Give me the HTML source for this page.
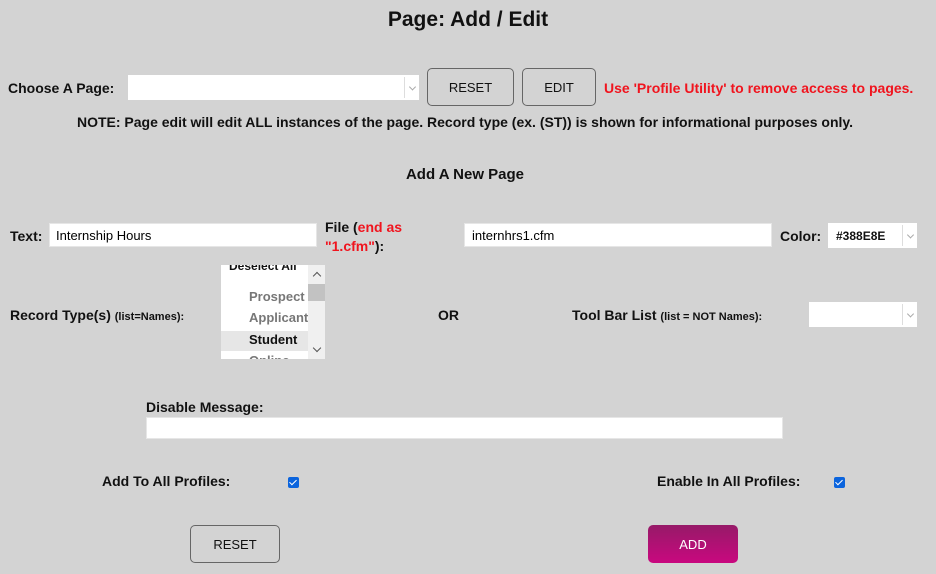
<!DOCTYPE html>
<html><head><meta charset="utf-8"><style>
*{box-sizing:border-box;margin:0;padding:0}
body{width:936px;height:574px;background:#d3d3d3;font-family:"Liberation Sans",sans-serif;font-weight:bold;font-size:14px;color:#111;position:relative;overflow:hidden}
.a{position:absolute;white-space:nowrap}
.in{position:absolute;background:#fff;border:1px solid #e6e6e6}
.sel{position:absolute;background:#fff}
.sel:after{content:"";position:absolute;right:0;top:2px;bottom:2px;width:14px;border-left:1px solid #ddd}
.sel i{position:absolute;right:4px;top:50%;width:5px;height:5px;border-right:1px solid #aaa;border-bottom:1px solid #aaa;transform:translateY(-70%) rotate(45deg)}
.btn{position:absolute;border:1px solid #666;border-radius:5px;background:#d3d3d3;font-weight:normal;font-size:13px;display:flex;align-items:center;justify-content:center}
.red{color:#f0141e}
small{font-size:11px}
.cb{position:absolute;width:11px;height:11px;background:#0b64dd;border-radius:2px}
.cb:after{content:"";position:absolute;left:3px;top:1px;width:3px;height:6px;border-right:1.5px solid #fff;border-bottom:1.5px solid #fff;transform:rotate(45deg)}
</style></head><body>
<div class="a" style="left:0;width:936px;text-align:center;top:8px;font-size:21px">Page: Add / Edit</div>
<div class="a" style="left:8px;top:80px">Choose A Page:</div>
<div class="sel" style="left:128px;top:75px;width:291px;height:25px"><i></i></div>
<div class="btn" style="left:427px;top:68px;width:87px;height:38px">RESET</div>
<div class="btn" style="left:522px;top:68px;width:74px;height:38px">EDIT</div>
<div class="a red" style="left:604px;top:80px">Use 'Profile Utility' to remove access to pages.</div>
<div class="a" style="left:0;width:930px;text-align:center;top:114px">NOTE: Page edit will edit ALL instances of the page. Record type (ex. (ST)) is shown for informational purposes only.</div>
<div class="a" style="left:0;width:930px;text-align:center;top:166px;font-size:15px">Add A New Page</div>
<div class="a" style="left:10px;top:228px">Text:</div>
<div class="in" style="left:49px;top:223px;width:268px;height:24px;font-weight:normal;font-size:13px;padding:4px 6px;color:#000">Internship Hours</div>
<div class="a" style="left:325px;top:218px;line-height:19px">File (<span class="red">end as</span><br><span class="red">"1.cfm"</span>):</div>
<div class="in" style="left:464px;top:223px;width:308px;height:24px;font-weight:normal;font-size:13px;padding:4px 7px;color:#000">internhrs1.cfm</div>
<div class="a" style="left:780px;top:228px">Color:</div>
<div class="sel" style="left:828px;top:223px;width:89px;height:25px;font-size:12px;padding:6px 8px">#388E8E<i></i></div>
<div class="a" style="left:10px;top:307px">Record Type(s) <small>(list=Names):</small></div>
<div style="position:absolute;left:221px;top:265px;width:104px;height:94px;background:#fff;overflow:hidden;font-size:13px">
 <div class="a" style="left:8px;top:-6px;font-size:12px">Deselect All</div>
 <div class="a" style="left:28px;top:24px;color:#777">Prospect</div>
 <div class="a" style="left:28px;top:45px;color:#777">Applicant</div>
 <div style="position:absolute;left:0;top:66px;width:87px;height:20px;background:#e6e6e6"></div>
 <div class="a" style="left:28px;top:67px">Student</div>
 <div class="a" style="left:28px;top:88px;color:#777">Online</div>
 <div style="position:absolute;left:87px;top:0;width:17px;height:94px;background:#f0f0f0"></div>
 <div style="position:absolute;left:87px;top:19px;width:17px;height:17px;background:#c2c2c2"></div>
 <div style="position:absolute;left:93px;top:8px;width:6px;height:6px;border-left:1.5px solid #555;border-top:1.5px solid #555;transform:rotate(45deg)"></div>
 <div style="position:absolute;left:93px;top:80px;width:6px;height:6px;border-right:1.5px solid #555;border-bottom:1.5px solid #555;transform:rotate(45deg)"></div>
</div>
<div class="a" style="left:438px;top:307px">OR</div>
<div class="a" style="left:572px;top:307px">Tool Bar List <small>(list = NOT Names):</small></div>
<div class="sel" style="left:809px;top:302px;width:108px;height:25px"><i></i></div>
<div class="a" style="left:146px;top:399px">Disable Message:</div>
<div class="in" style="left:146px;top:417px;width:637px;height:22px"></div>
<div class="a" style="left:102px;top:473px">Add To All Profiles:</div>
<div class="cb" style="left:288px;top:477px"></div>
<div class="a" style="left:657px;top:473px">Enable In All Profiles:</div>
<div class="cb" style="left:834px;top:477px"></div>
<div class="btn" style="left:190px;top:525px;width:90px;height:38px">RESET</div>
<div class="btn" style="left:648px;top:525px;width:90px;height:38px;border:none;background:linear-gradient(#961a68,#c9087f);color:#fff">ADD</div>
</body></html>
